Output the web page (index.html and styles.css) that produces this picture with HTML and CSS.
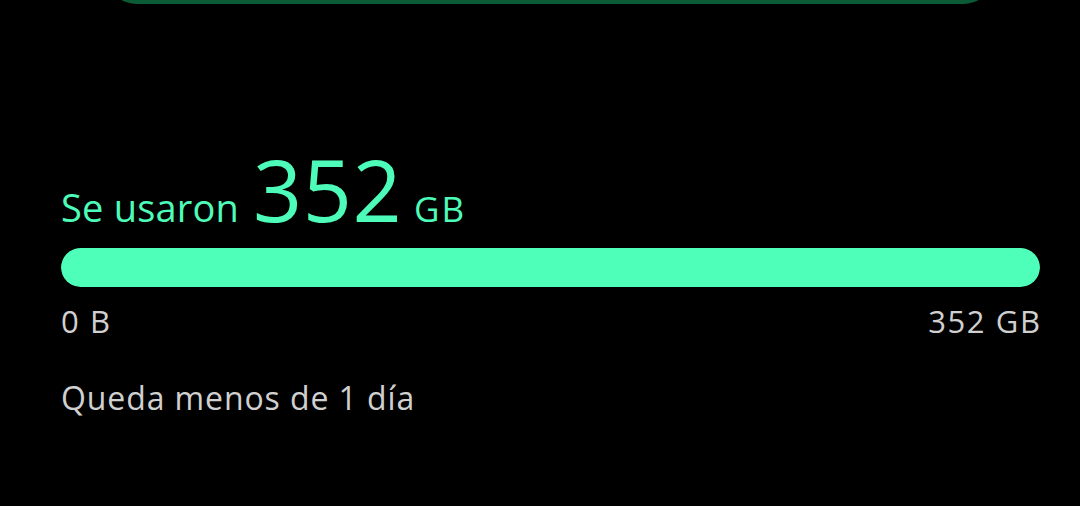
FILE: index.html
```html
<!DOCTYPE html>
<html lang="es">
<head>
<meta charset="utf-8">
<link rel="stylesheet" href="styles.css">
</head>
<body>
<div class="top-card"></div>
<section class="storage">
  <div class="used">
    <span class="label">Se usaron</span>
    <span class="amount">352</span>
    <span class="unit">GB</span>
  </div>
  <div class="bar"><div class="fill" style="width:100%"></div></div>
  <div class="scale">
    <span>0 B</span>
    <span>352 GB</span>
  </div>
  <div class="remaining">Queda menos de 1 día</div>
</section>
</body>
</html>
```
FILE: styles.css
```css
html, body {
  margin: 0;
  padding: 0;
  background: #000;
  width: 1080px;
  height: 506px;
  overflow: hidden;
  font-family: "Open Sans", "Noto Sans", sans-serif;
}
.top-card {
  margin: -40px 88px 0 108px;
  height: 44px;
  border-radius: 0 0 28px 28px;
  background: #0b5c36;
}
.storage {
  padding: 0 40px 0 61px;
}
.used {
  display: flex;
  align-items: baseline;
  color: #4dfcb8;
  margin-top: 142px;
  height: 100px;
  line-height: 1;
}
.label {
  font-size: 38px;
  letter-spacing: 0.2px;
  margin-right: 14px;
}
.amount {
  font-size: 86px;
  letter-spacing: 0.5px;
  margin-right: 12px;
}
.unit {
  font-size: 35px;
  letter-spacing: 2px;
}
.bar {
  margin-top: 2px;
  height: 39px;
  border-radius: 20px;
  background: #1a3a2e;
  overflow: hidden;
}
.fill {
  height: 100%;
  background: #4dffb9;
  border-radius: 20px;
}
.scale {
  display: flex;
  justify-content: space-between;
  color: #d0d0d0;
  font-size: 31px;
  letter-spacing: 1.6px;
  margin-top: 16px;
  margin-right: -1.6px;
  line-height: 36px;
}
.remaining {
  color: #d0d0d0;
  font-size: 32px;
  letter-spacing: 0.9px;
  margin-top: 41px;
  line-height: 36px;
}
```
